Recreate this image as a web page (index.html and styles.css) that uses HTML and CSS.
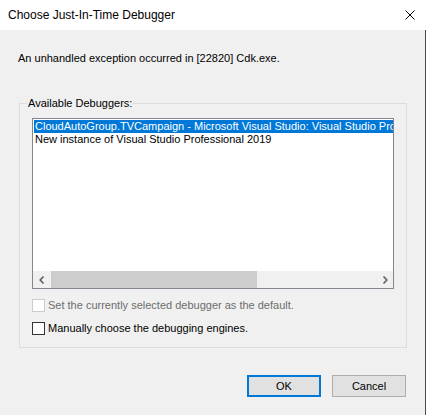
FILE: index.html
```html
<!DOCTYPE html>
<html>
<head>
<meta charset="utf-8">
<link rel="stylesheet" href="styles.css">
</head>
<body>
<div class="window">
  <div class="titlebar">
    <span class="title">Choose Just-In-Time Debugger</span>
    <svg class="close" width="10" height="10" viewBox="0 0 10 10"><path d="M0.5 0.5 L9.5 9.5 M9.5 0.5 L0.5 9.5" stroke="#000" stroke-width="1" fill="none"/></svg>
  </div>
  <div class="content">
    <p class="message">An unhandled exception occurred in [22820] Cdk.exe.</p>
    <fieldset class="group">
      <legend>Available Debuggers:</legend>
      <div class="listbox">
        <div class="rows">
          <div class="row selected">CloudAutoGroup.TVCampaign - Microsoft Visual Studio: Visual Studio Professional 2019</div>
          <div class="row">New instance of Visual Studio Professional 2019</div>
        </div>
        <div class="hscroll">
          <div class="arrow"><svg width="6" height="8" viewBox="0 0 6 8"><path d="M4.5 0.5 L1.2 4 L4.5 7.5" stroke="#606060" stroke-width="1.6" fill="none"/></svg></div>
          <div class="track"><div class="thumb"></div></div>
          <div class="arrow"><svg width="6" height="8" viewBox="0 0 6 8"><path d="M1.5 0.5 L4.8 4 L1.5 7.5" stroke="#606060" stroke-width="1.6" fill="none"/></svg></div>
        </div>
      </div>
      <label class="check disabled"><span class="box"></span>Set the currently selected debugger as the default.</label>
      <label class="check"><span class="box"></span>Manually choose the debugging engines.</label>
    </fieldset>
    <div class="buttons">
      <button class="btn default">OK</button>
      <button class="btn">Cancel</button>
    </div>
  </div>
</div>
</body>
</html>
```

FILE: styles.css
```css
html, body {
  margin: 0;
  padding: 0;
}
body {
  font-family: "Liberation Sans", Arial, sans-serif;
  font-size: 11px;
  color: #000;
  background: #f0f0f0;
}
.window {
  width: 426px;
  height: 415px;
  display: flex;
  flex-direction: column;
}
.titlebar {
  height: 30px;
  flex: none;
  background: #fff;
  display: flex;
  align-items: center;
  justify-content: space-between;
  padding: 0 11px 0 8px;
}
.title {
  font-size: 12px;
  line-height: 14px;
}
.close {
  display: block;
}
.content {
  flex: 1;
  background: #f0f0f0;
  border-right: 1px solid #4a4a4a;
  display: flex;
  flex-direction: column;
}
.message {
  margin: 22px 0 0 18px;
  line-height: 13px;
}
.group {
  margin: 32px 18px 0 19px;
  border: 1px solid #dcdcdc;
  padding: 0 12px 12px 6px;
  min-width: 0;
}
.group legend {
  padding: 0 1px;
  line-height: 13px;
  margin-left: 1px;
}
.listbox {
  margin: 8px 0 0 6px;
  width: 362px;
  height: 171px;
  box-sizing: border-box;
  border: 1px solid #828790;
  background: #fff;
  display: flex;
  flex-direction: column;
  overflow: hidden;
}
.rows {
  flex: 1;
  padding: 1px 0 0 1px;
  overflow: hidden;
}
.row {
  white-space: nowrap;
  line-height: 13px;
  height: 13px;
  padding-left: 1px;
  overflow: hidden;
}
.row.selected {
  background: #0078d7;
  color: #fff;
}
.hscroll {
  height: 17px;
  flex: none;
  display: flex;
  background: #f0f0f0;
}
.arrow {
  width: 17px;
  flex: none;
  display: flex;
  align-items: center;
  justify-content: center;
}
.arrow svg {
  display: block;
}
.track {
  flex: 1;
  display: flex;
  align-items: stretch;
  padding: 0;
}
.thumb {
  width: 206px;
  background: #cdcdcd;
  margin-left: 1px;
}
.check {
  display: flex;
  align-items: center;
  margin: 10px 0 0 6px;
  line-height: 13px;
}
.check + .check {
  margin-top: 10px;
}
.box {
  width: 13px;
  height: 13px;
  box-sizing: border-box;
  border: 1px solid #333;
  background: #fff;
  margin-right: 3px;
  flex: none;
}
.check.disabled {
  color: #6d6d6d;
}
.check.disabled .box {
  border-color: #cccccc;
  background: #fff;
}
.buttons {
  display: flex;
  justify-content: flex-end;
  gap: 11px;
  margin: 27px 19px 0 0;
}
.btn {
  width: 74px;
  height: 22px;
  box-sizing: border-box;
  border: 1px solid #adadad;
  background: #e1e1e1;
  font-family: "Liberation Sans", Arial, sans-serif;
  font-size: 11px;
  color: #000;
  padding: 0;
  margin: 0;
}
.btn.default {
  border: 2px solid #0078d7;
}
```
